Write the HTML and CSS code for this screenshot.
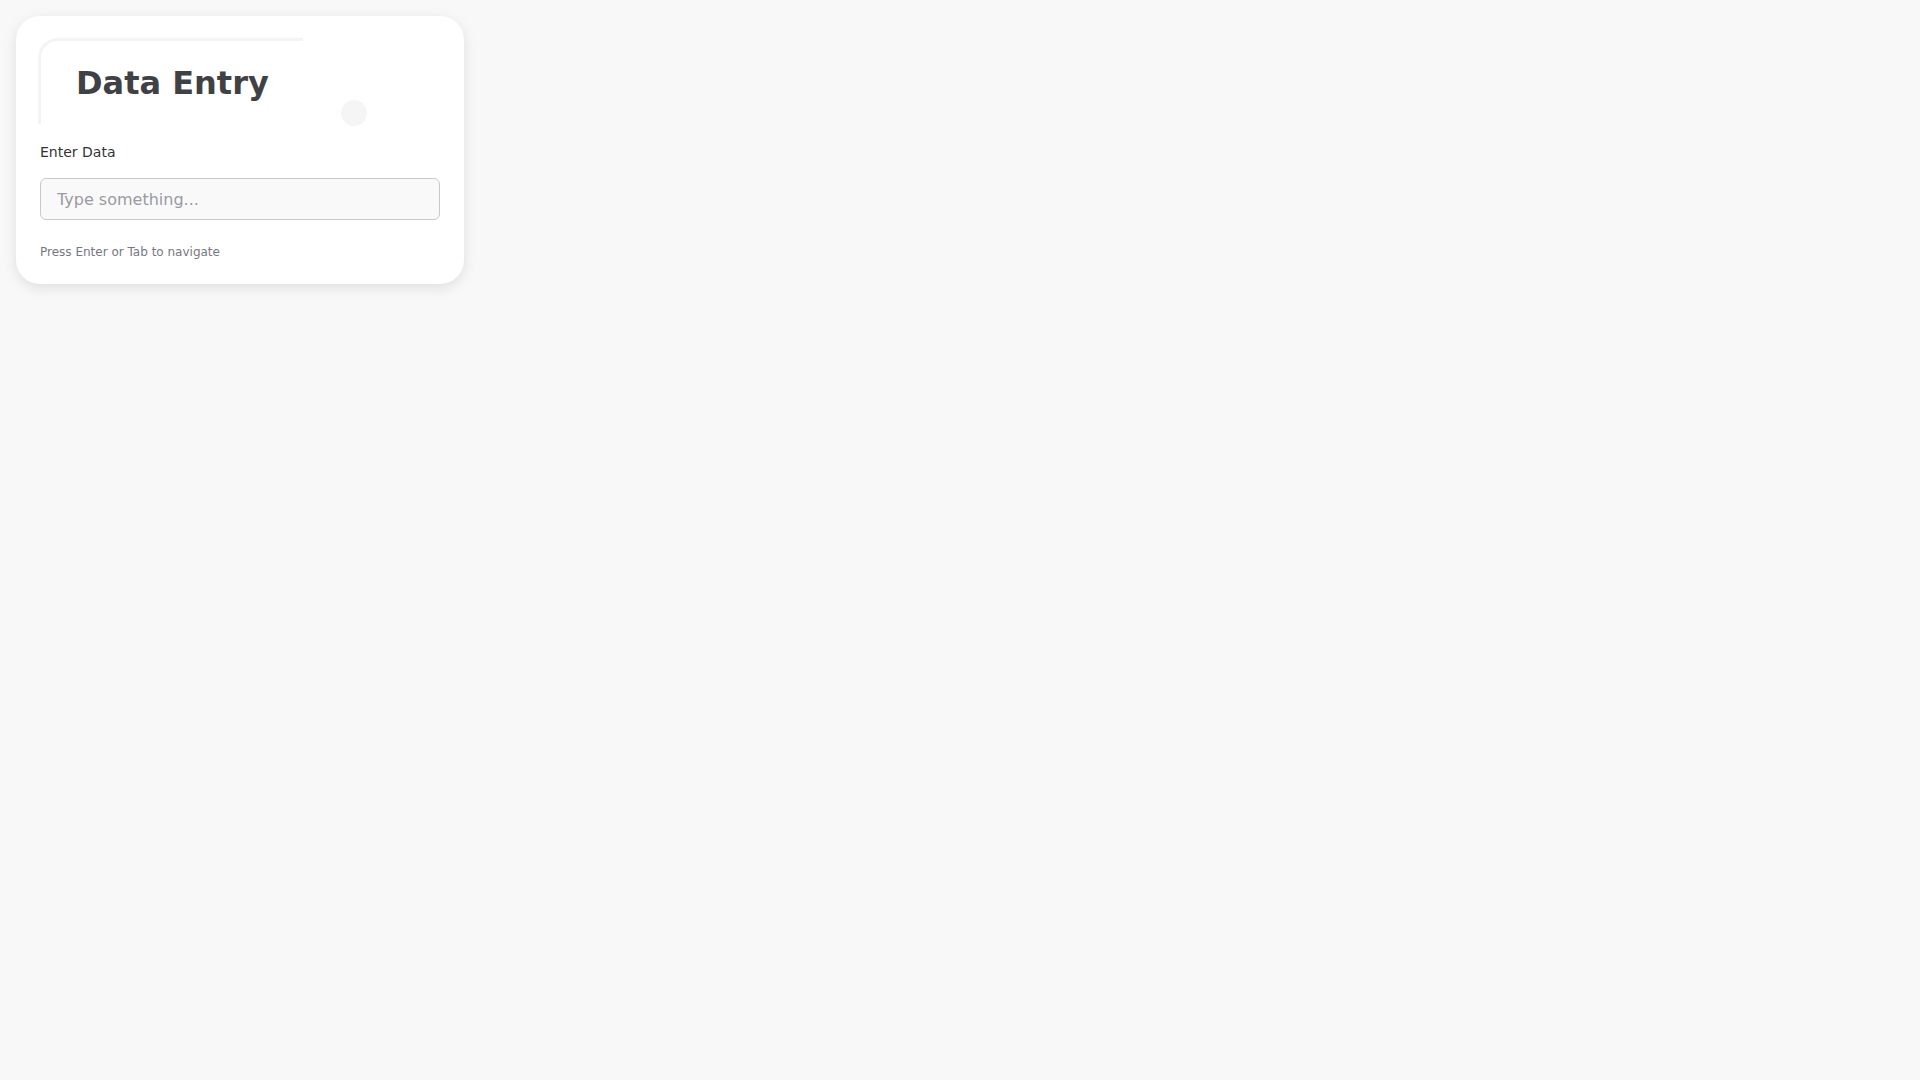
FILE: index.html
```html
<!DOCTYPE html>
<html lang="en">
<head>
  <meta charset="UTF-8" />
  <title>Data Entry</title>
  <link rel="stylesheet" href="styles.css">
</head>
<body>
  <div class="entry-card">
    <div class="entry-header">
      <h1>Data Entry</h1>
    </div>
    <span class="dot"></span>
    <label for="dataInput">Enter Data</label>
    <input id="dataInput" type="text" placeholder="Type something..." />
    <p class="hint">Press Enter or Tab to navigate</p>
  </div>
</body>
</html>
```

FILE: styles.css
```css
* {
  box-sizing: border-box;
}
body {
  font-family: "DejaVu Sans", sans-serif;
  background-color: #f8f8f8;
  margin: 0;
  padding: 16px;
}
.entry-card {
  position: relative;
  width: 448px;
  background-color: #fff;
  border-radius: 24px;
  padding: 22px 24px 25px;
  box-shadow: 0 4px 14px rgba(0, 0, 0, 0.1);
}
.entry-header {
  width: 265px;
  height: 86px;
  margin-left: -2px;
  padding: 23px 0 0 35px;
  border-top: 3px solid #f4f4f4;
  border-left: 3px solid #f4f4f4;
  border-top-left-radius: 20px;
}
h1 {
  margin: 0;
  font-size: 32px;
  font-weight: bold;
  color: #404145;
}
.dot {
  position: absolute;
  left: 325px;
  top: 84px;
  width: 26px;
  height: 26px;
  border-radius: 50%;
  background-color: #f5f5f5;
}
label {
  display: block;
  margin-top: 20px;
  font-size: 14px;
  color: #333;
}
input {
  display: block;
  width: 100%;
  height: 42px;
  margin-top: 18px;
  padding: 0 16px;
  font-family: inherit;
  font-size: 16px;
  color: #333;
  background-color: #f9f9f9;
  border: 1px solid #c8c8d0;
  border-radius: 6px;
}
input::placeholder {
  color: #9a9aa2;
}
input:focus {
  outline: none;
  border-color: #5b9bd5;
}
.hint {
  margin: 25px 0 0;
  font-size: 12px;
  color: #767880;
}
```
